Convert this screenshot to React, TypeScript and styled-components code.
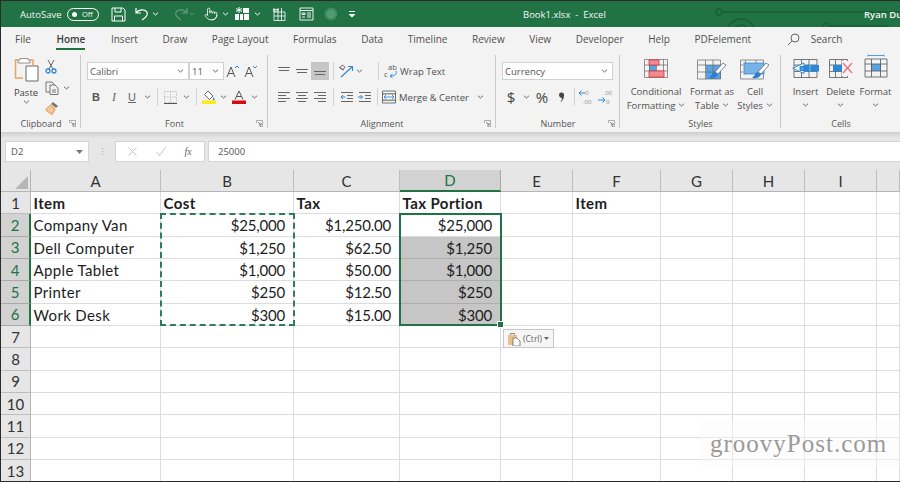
import React from "react"
import styled, { createGlobalStyle } from "styled-components"
import { Pointer } from "lucide-react"

const GlobalStyle = createGlobalStyle`
  html, body { margin: 0; padding: 0; background: #fff; overflow: hidden; }
  * { box-sizing: border-box; }
`

const UI_FONT = `"Open Sans", "Noto Sans", "Liberation Sans", sans-serif`
const GREEN = "#217346"

const Page = styled.div`
  position: relative;
  width: 900px;
  height: 482px;
  overflow: hidden;
  border-top: 1px solid #2b2b2b;
  border-left: 1px solid #2b2b2b;
  border-bottom: 1px solid #2b2b2b;
  font-family: ${UI_FONT};
  color: #444;
  background: #fff;
`

/* ---------- title bar ---------- */
const TitleBar = styled.div`
  position: relative;
  height: 26px;
  background: ${GREEN};
  color: #f2f7f4;
  display: flex;
  align-items: center;
  font-size: 9.5px;
  padding-left: 19px;
  overflow: hidden;
`
const QuickAccess = styled.div`
  display: flex;
  align-items: center;
  width: 503px;
  flex: none;
`
const AutoSaveLabel = styled.span`
  width: 47px;
  flex: none;
`
const Toggle = styled.div`
  width: 32px;
  height: 13px;
  flex: none;
  border: 1px solid #fff;
  border-radius: 7px;
  display: flex;
  align-items: center;
  gap: 5px;
  padding-left: 4px;
  font-size: 7.5px;
  margin-right: 11px;
  &::before {
    content: "";
    width: 5px;
    height: 5px;
    border-radius: 50%;
    background: #fff;
  }
`
const QuickSlot = styled.div<{ $w: number; $dim?: boolean }>`
  width: ${p => p.$w}px;
  flex: none;
  height: 20px;
  display: flex;
  align-items: center;
  justify-content: center;
  opacity: ${p => (p.$dim ? 0.3 : 1)};
`
const DocTitle = styled.div`
  width: 341px;
  flex: none;
  font-size: 9.5px;
  white-space: pre;
`
const UserName = styled.div`
  font-size: 9.5px;
  white-space: nowrap;
  font-weight: 600;
  position: relative;
  z-index: 1;
`
const Circuit = styled.svg`
  position: absolute;
  left: 700px;
  top: 0;
`

/* ---------- tabs ---------- */
const TabBar = styled.div`
  height: 26px;
  background: #f3f3f3;
  display: flex;
  align-items: flex-start;
  padding-left: 14px;
  gap: 24.6px;
  font-size: 10px;
  color: #505050;
`
const Tab = styled.div<{ $active?: boolean; $first?: boolean }>`
  height: 23px;
  padding-top: 5px;
  white-space: nowrap;
  margin-right: ${p => (p.$first ? "1px" : "0")};
  font-weight: ${p => (p.$active ? 600 : 400)};
  color: ${p => (p.$active ? "#3d3d3d" : "#505050")};
  border-bottom: ${p => (p.$active ? `2px solid ${GREEN}` : "2px solid transparent")};
`
const SearchTab = styled.div`
  margin-left: 11px;
  padding-top: 5px;
  display: flex;
  align-items: flex-start;
  gap: 11px;
  svg { margin-top: 1px; }
`

/* ---------- ribbon ---------- */
const Ribbon = styled.div`
  height: 79px;
  background: #f3f3f3;
  display: flex;
`
const Group = styled.div<{ $w: number; $last?: boolean }>`
  position: relative;
  width: ${p => p.$w}px;
  flex: none;
  display: flex;
  flex-direction: column;
  &::after {
    content: "";
    display: ${p => (p.$last ? "none" : "block")};
    position: absolute;
    right: 0;
    top: 2px;
    bottom: 4px;
    width: 1px;
    background: #c9c9c9;
  }
`
const GroupBody = styled.div`
  flex: 1;
  min-height: 0;
  display: flex;
`
const GroupLabel = styled.div`
  position: relative;
  height: 15px;
  text-align: center;
  font-size: 9px;
  line-height: 13px;
  color: #555;
`
const Launcher = styled.svg`
  position: absolute;
  right: 5px;
  top: 3px;
`
const Rows = styled.div<{ $pad: number }>`
  padding: 9px 0 0 ${p => p.$pad}px;
  display: flex;
  flex-direction: column;
  gap: 8px;
`
const Row = styled.div`
  height: 18px;
  display: flex;
  align-items: center;
`
const Slot = styled.div<{ $w: number; $on?: boolean }>`
  width: ${p => p.$w}px;
  height: 18px;
  flex: none;
  display: flex;
  align-items: center;
  justify-content: center;
  background: ${p => (p.$on ? "#c6c6c6" : "transparent")};
`
const Sep = styled.div<{ $w: number }>`
  width: ${p => p.$w}px;
  height: 18px;
  flex: none;
  display: flex;
  justify-content: center;
  &::before {
    content: "";
    width: 1px;
    background: #d2d2d2;
  }
`
const Combo = styled.div<{ $w: number }>`
  width: ${p => p.$w}px;
  height: 18px;
  flex: none;
  background: #fff;
  border: 1px solid #d0d0d0;
  display: flex;
  align-items: center;
  justify-content: space-between;
  padding: 0 4px 0 2px;
  font-size: 9.5px;
  color: #555;
`
const TextAction = styled.div<{ $w: number; $pad?: number }>`
  width: ${p => p.$w}px;
  height: 18px;
  flex: none;
  display: flex;
  align-items: center;
  gap: 8px;
  padding-left: ${p => p.$pad ?? 0}px;
  font-size: 9.5px;
  white-space: nowrap;
  color: #505050;
`
const NumberGlyph = styled.span`
  font-size: 15px;
  color: #444;
`
const PasteButton = styled.div`
  width: 36px;
  margin-left: 7px;
  padding-top: 4px;
  display: flex;
  flex-direction: column;
  align-items: center;
  gap: 1px;
  font-size: 9.5px;
  line-height: 13px;
  svg:first-child { margin-bottom: 3px; }
`
const ClipTools = styled.div`
  padding: 5px 0 0 1px;
  display: flex;
  flex-direction: column;
  gap: 3px;
`
const ClipTool = styled.div`
  height: 19px;
  display: flex;
  align-items: center;
  gap: 4px;
`
const TallButton = styled.div<{ $w: number }>`
  width: ${p => p.$w}px;
  flex: none;
  padding-top: 6px;
  display: flex;
  flex-direction: column;
  align-items: center;
  font-size: 9.5px;
  line-height: 13.5px;
  color: #505050;
  text-align: center;
  white-space: nowrap;
`
const TallIcon = styled.div<{ $raised?: boolean }>`
  height: ${p => (p.$raised ? 31 : 26)}px;
  margin-top: ${p => (p.$raised ? -5 : 0)}px;
  display: flex;
  align-items: flex-start;
`
const TallLine = styled.div`
  height: 13.5px;
  display: flex;
  align-items: center;
  gap: 3px;
`
const TallSpacer = styled.div<{ $w: number }>`
  width: ${p => p.$w}px;
  flex: none;
`
const RibbonShadow = styled.div`
  height: 6px;
  background: linear-gradient(#cfcfcf, #e6e6e6);
`

/* ---------- formula bar ---------- */
const FormulaBar = styled.div`
  height: 32px;
  background: #e6e6e6;
  display: flex;
  padding: 3px 0 0 4px;
  align-items: flex-start;
`
const NameBox = styled.div`
  width: 84px;
  height: 21px;
  flex: none;
  background: #fff;
  border: 1px solid #d4d4d4;
  display: flex;
  align-items: center;
  justify-content: space-between;
  padding: 0 5px;
  font-size: 9.5px;
  color: #555;
`
const Grip = styled.div`
  width: 26px;
  height: 21px;
  flex: none;
  display: flex;
  align-items: center;
  justify-content: center;
  color: #a5a5a5;
  font-size: 9px;
`
const FormulaButtons = styled.div`
  width: 90px;
  height: 21px;
  flex: none;
  background: #fff;
  border: 1px solid #d4d4d4;
  display: flex;
  align-items: center;
  justify-content: space-around;
  padding: 0 3px;
  font-family: "Liberation Serif", serif;
  font-style: italic;
  font-size: 10px;
  color: #666;
  margin-right: 3px;
`
const FormulaInput = styled.div`
  flex: 1;
  height: 21px;
  background: #fff;
  border: 1px solid #d4d4d4;
  border-right: none;
  padding-left: 9px;
  font-size: 9.5px;
  line-height: 19px;
  color: #555;
`

/* ---------- sheet ---------- */
const Sheet = styled.div`
  position: relative;
  display: grid;
  grid-template-columns: 30px 130px 133px 106px 101px 72px 88px 72px 72px 72px 23px;
  grid-template-rows: 22px repeat(13, 22.35px);
  font-family: Lato, "Liberation Sans", sans-serif;
  font-size: 15px;
  color: #1d1d1d;
`
const Corner = styled.div`
  background: #e6e6e6;
  border-right: 1px solid #b5b5b5;
  border-bottom: 1px solid #b5b5b5;
  position: relative;
  &::after {
    content: "";
    position: absolute;
    right: 2px;
    bottom: 2px;
    border-style: solid;
    border-width: 0 0 13px 13px;
    border-color: transparent transparent #b7b7b7 transparent;
  }
`
const ColHead = styled.div<{ $on?: boolean }>`
  background: ${p => (p.$on ? "#d2d2d2" : "#e6e6e6")};
  color: ${p => (p.$on ? "#217346" : "#333")};
  border-right: 1px solid ${p => (p.$on ? "#a9a9a9" : "#bdbdbd")};
  border-bottom: ${p => (p.$on ? `2px solid ${GREEN}` : "1px solid #b5b5b5")};
  display: flex;
  align-items: center;
  justify-content: center;
`
const RowHead = styled.div<{ $on?: boolean }>`
  background: ${p => (p.$on ? "#d2d2d2" : "#e6e6e6")};
  color: ${p => (p.$on ? "#217346" : "#333")};
  border-right: ${p => (p.$on ? `2px solid ${GREEN}` : "1px solid #b5b5b5")};
  border-bottom: 1px solid ${p => (p.$on ? "#a9a9a9" : "#bdbdbd")};
  display: flex;
  align-items: center;
  justify-content: center;
`
const Cell = styled.div<{ $right?: boolean; $bold?: boolean; $copied?: boolean }>`
  background: ${p => (p.$copied ? "#c6c6c6" : "#fff")};
  border-right: 1px solid ${p => (p.$copied ? "#adadad" : "#dcdcdc")};
  border-bottom: 1px solid ${p => (p.$copied ? "#adadad" : "#dcdcdc")};
  display: flex;
  align-items: center;
  justify-content: ${p => (p.$right ? "flex-end" : "flex-start")};
  padding: 0.5px 8px 0 2.5px;
  font-weight: ${p => (p.$bold ? 700 : 400)};
  white-space: nowrap;
  letter-spacing: ${p => (p.$right ? "-0.2px" : p.$bold ? "0.4px" : "0.35px")};
`
/* absolute children of a grid take their grid area as containing block,
   so these overlays stay out of the cell auto-placement */
const MarchingAnts = styled.div`
  position: absolute;
  grid-column: 3 / 4;
  grid-row: 3 / 8;
  inset: -1px -1px 0 -1px;
  border: 2px dashed #2f7d57;
  z-index: 2;
  pointer-events: none;
`
const Selection = styled.div`
  position: absolute;
  grid-column: 5 / 6;
  grid-row: 3 / 8;
  inset: -1px -1px 0 -1px;
  border: 2px solid ${GREEN};
  z-index: 3;
  pointer-events: none;
`
const FillHandle = styled.div`
  position: absolute;
  right: -4px;
  bottom: -4px;
  width: 5px;
  height: 5px;
  background: ${GREEN};
  border: 1px solid #fff;
  box-sizing: content-box;
`
const PasteTag = styled.div`
  position: absolute;
  grid-column: 6 / 7;
  grid-row: 8 / 9;
  left: 2px;
  top: 3px;
  z-index: 4;
  width: 51px;
  height: 19px;
  background: #f6f6f6;
  border: 1px solid #c6c6c6;
  display: flex;
  align-items: center;
  gap: 2px;
  padding-left: 3px;
  font-family: ${UI_FONT};
  font-size: 8.5px;
  color: #666;
`
const Watermark = styled.div`
  position: absolute;
  right: 0;
  bottom: 14px;
  width: 200px;
  height: 46px;
  display: flex;
  align-items: center;
  padding-left: 10px;
  background: rgba(250, 250, 250, 0.4);
  font-family: "Liberation Serif", serif;
  font-size: 25px;
  letter-spacing: 1px;
  color: #9a9a9a;
  z-index: 5;
`

/* ---------- icons ---------- */
const Chev = ({ color = "#666" }: { color?: string }) => (
  <svg width="7" height="4" viewBox="0 0 7 4">
    <path d="M1 .7 3.5 3 6 .7" fill="none" stroke={color} strokeWidth="1" />
  </svg>
)

const Lines = ({ rows }: { rows: [number, number, number][] }) => (
  <svg width="14" height="14" viewBox="0 0 14 14">
    {rows.map(([x, y, w], i) => (
      <rect key={i} x={x} y={y} width={w} height="1" fill="#666" />
    ))}
  </svg>
)

const SaveIcon = () => (
  <svg width="15" height="15" viewBox="0 0 15 15" fill="none" stroke="#fff" strokeWidth="1">
    <path d="M1 1h11l2 2v11H1zM4 1v4h6V1M3.500 14V9h8v5" />
  </svg>
)
const UndoIcon = () => (
  <svg width="14" height="14" viewBox="0 0 14 14" fill="none" stroke="#fff" strokeWidth="1.2">
    <path d="M1 1v5h5M1.500 5.500C4 2.500 9 2 11.500 4.500c2 2.300 .5 5.500-4.500 8.500" />
  </svg>
)
const RedoIcon = () => (
  <svg width="14" height="14" viewBox="0 0 14 14" fill="none" stroke="#fff" strokeWidth="1.2">
    <path d="M13 1v5H8M12.500 5.500C10 2.500 5 2 2.500 4.500c-2 2.300-.5 5.500 4.500 8.500" />
  </svg>
)
const StarTable = () => (
  <svg width="16" height="14" viewBox="0 0 16 14">
    <path d="M5 0v6M2 1.500l6 3M8 1.500l-6 3" stroke="#fff" strokeWidth="1" />
    <path d="M9 1h6v5H9zM1 7h4v6H1zM6 7h3v6H6zM10 7h5v6h-5z" fill="#fff" />
  </svg>
)
const SheetIcon = () => (
  <svg width="14" height="14" viewBox="0 0 14 14" fill="none" stroke="#fff" strokeWidth=".8">
    <path d="M2 5h11v8.500H2zM2 9h11M6 5v8.500M9.500 1v12.500M6 1v4M2 1v4" />
    <path d="M1 2.500h6M1 4h5" />
  </svg>
)
const FormIcon = () => (
  <svg width="15" height="14" viewBox="0 0 15 14" fill="none" stroke="#fff" strokeWidth=".9">
    <path d="M1 1h13v12H1zM1 3.500h13" />
    <path d="M3 6h3v1.500H3zM8 6h4M8 8h4M3 10h3M8 10h4" />
  </svg>
)
const CustomizeIcon = () => (
  <svg width="8" height="7" viewBox="0 0 8 7">
    <path d="M1 .5h6" stroke="#fff" strokeWidth="1" />
    <path d="M.5 3h7L4 6.500z" fill="#fff" />
  </svg>
)
const PasteIcon = () => (
  <svg width="25" height="25" viewBox="0 0 25 25" fill="none">
    <path d="M4 3H1.500v18H9M16 3h3v5" stroke="#e8a35f" strokeWidth="1.500" />
    <path d="M6 3V1.500h8V3h2v3H4V3z" fill="#fff" stroke="#888" strokeWidth=".9" />
    <path d="M12 9h12v15H12z" fill="#fff" stroke="#666" strokeWidth="1" />
  </svg>
)
const ScissorsIcon = () => (
  <svg width="12" height="15" viewBox="0 0 12 15" fill="none">
    <path d="M3 1l5 9M9 1 4 10" stroke="#666" strokeWidth="1" />
    <circle cx="3" cy="12" r="2" stroke="#2b88d8" strokeWidth="1.300" />
    <circle cx="9" cy="12" r="2" stroke="#2b88d8" strokeWidth="1.300" />
  </svg>
)
const CopyIcon = () => (
  <svg width="14" height="14" viewBox="0 0 14 14" fill="#f3f3f3" stroke="#666" strokeWidth=".9">
    <path d="M1 1h6l2 2v8H1z" />
    <path d="M5 4h5l3 3v6.500H5z" />
    <path d="M7 9h4M7 11h4" />
  </svg>
)
const PainterIcon = () => (
  <svg width="14" height="14" viewBox="0 0 14 14" fill="none">
    <path d="M8 1l5 4-2 2-5-4z" fill="#777" />
    <path d="M5.500 4 10 8l-3 5.500C5 12 2 10.500.8 8.500z" fill="#f3c79b" stroke="#e8923c" strokeWidth="1" />
  </svg>
)
const GrowIcon = ({ up }: { up: boolean }) => (
  <svg width="14" height="14" viewBox="0 0 14 14" fill="none">
    <path d="M1 13 5 3l4 10M2.500 9.500h5" stroke="#555" strokeWidth="1" />
    <path d={up ? "M9 4l2-2 2 2" : "M9 2l2 2 2-2"} stroke="#2b88d8" strokeWidth="1" />
  </svg>
)
const Bold = styled.span`
  font-family: "Liberation Sans", sans-serif;
  font-weight: 700;
  font-size: 11px;
  color: #555;
`
const Italic = styled.span`
  font-family: "Liberation Serif", serif;
  font-style: italic;
  font-size: 12px;
  color: #666;
`
const Under = styled.span`
  font-family: "Liberation Sans", sans-serif;
  font-size: 11px;
  color: #666;
  text-decoration: underline;
`
const BordersIcon = () => (
  <svg width="13" height="13" viewBox="0 0 13 13" fill="none" stroke="#c4c4c4" strokeWidth="1" strokeDasharray="1.500 1">
    <path d="M.5.500h12v11H.5zM6.500.500v11M.5 6h12" />
    <path d="M0 12.500h13" stroke="#555" strokeDasharray="none" />
  </svg>
)
const FillIcon = () => (
  <svg width="14" height="14" viewBox="0 0 14 14" fill="none">
    <path d="M6 1l5 5-3.500 3.500-5-5z" stroke="#666" strokeWidth="1" fill="#fff" />
    <path d="M11.500 7c1 1.500 1.500 2 1 3s-2 .5-1.500-.5z" fill="#2b88d8" />
    <rect x="0" y="10.500" width="14" height="3.500" fill="#ffeb17" />
  </svg>
)
const FontColorIcon = () => (
  <svg width="14" height="14" viewBox="0 0 14 14" fill="none">
    <path d="M3 9.500 7 1l4 8.500M4.500 6.500h5" stroke="#555" strokeWidth="1" />
    <rect x="0" y="10.500" width="14" height="3.500" fill="#d50c0c" />
  </svg>
)
const OrientationIcon = () => (
  <svg width="16" height="14" viewBox="0 0 16 14" fill="none">
    <path d="M1 3l5 3M4 1l3 2-2 3-3-2z" stroke="#666" strokeWidth=".9" />
    <path d="M3 13 14 3M10 2.500h4.500V7" stroke="#2b88d8" strokeWidth="1.100" />
  </svg>
)
const IndentIcon = ({ out }: { out: boolean }) => (
  <svg width="13" height="13" viewBox="0 0 13 13" fill="none">
    <path d="M1 1.500h12M7 4.500h6M7 7.500h6M1 10.500h12" stroke="#666" strokeWidth="1" />
    <path d={out ? "M5.500 6H1M3 4 1 6l2 2" : "M0 6h4.500M2.500 4l2 2-2 2"} stroke="#2b88d8" strokeWidth="1" />
  </svg>
)
const WrapIcon = () => (
  <svg width="14" height="16" viewBox="0 0 14 16" fill="none">
    <text x="4" y="6.500" fontSize="7.500" fill="#555" fontFamily="Open Sans">ab</text>
    <text x="0" y="14" fontSize="7.500" fill="#555" fontFamily="Open Sans">c</text>
    <path d="M12 8c1 2.500-.5 5-5 5M8.500 11 6 13l2.500 2" stroke="#2b88d8" strokeWidth="1" />
  </svg>
)
const MergeIcon = () => (
  <svg width="14" height="14" viewBox="0 0 14 14" fill="none" stroke="#666" strokeWidth=".9">
    <path d="M.5 1h13v12H.5zM.5 4h13M.5 10h13" />
    <path d="M.5 4h13v6H.5z" fill="#fff" />
    <path d="M2 7h10M4 5l-2 2 2 2M10 5l2 2-2 2" stroke="#2b88d8" />
  </svg>
)
const CommaIcon = () => (
  <svg width="7" height="11" viewBox="0 0 7 11">
    <path d="M1 2.500a2.500 2.500 0 1 1 5 1c0 3-1.500 5.500-4 7C3.500 8.500 4 7.500 4 6 2 6 1 4.500 1 2.500z" fill="#444" />
  </svg>
)
const DecimalIcon = ({ more }: { more: boolean }) => (
  <svg width="15" height="16" viewBox="0 0 15 16" fill="none">
    <text x="7" y="5.500" fontSize="6" fill="#888" fontFamily="Open Sans">{more ? ".00" : "0"}</text>
    <text x={more ? 9 : 5} y="14.500" fontSize="6" fill="#888" fontFamily="Open Sans">{more ? "0" : ".00"}</text>
    {more ? (
      <path d="M1 11h7M5.500 8.500 8 11l-2.500 2.500" stroke="#2b88d8" strokeWidth="1" />
    ) : (
      <path d="M1 4h6M3.500 1.500 1 4l2.500 2.500" stroke="#2b88d8" strokeWidth="1" />
    )}
  </svg>
)
const SearchIcon = () => (
  <svg width="13" height="13" viewBox="0 0 13 13" fill="none" stroke="#666" strokeWidth="1">
    <circle cx="8" cy="5" r="4" />
    <path d="M5 8 1 12" />
  </svg>
)
const CondFormatIcon = () => (
  <svg width="24" height="19" viewBox="0 0 24 19" fill="none">
    <rect x="5" y="6" width="7" height="6" fill="#5ba3e0" />
    <path d="M.5.500h23v18H.5zM.5 6h23M.5 12h23M5.500.500v18M12.500.500v18M19.500.500v18" stroke="#666" strokeWidth=".7" />
    <rect x="5" y="1" width="10" height="5" fill="#f28a90" stroke="#d9363e" strokeWidth=".8" />
    <rect x="5" y="12" width="15" height="6" fill="#f28a90" stroke="#d9363e" strokeWidth=".8" />
  </svg>
)
const Brush = () => (
  <>
    <path d="M26 4 18 13l3 2 8-9z" fill="#fff" stroke="#666" strokeWidth=".8" />
    <path d="M17 13c-2 1-2 4-5 6 4 1 8 0 9-4z" fill="#2b7cd3" />
  </>
)
const TableStyleIcon = () => (
  <svg width="30" height="21" viewBox="0 0 30 21" fill="none">
    <rect x="9" y="6" width="15" height="14" fill="#5ba3e0" />
    <path d="M.5 1h23v19H.5zM.5 6h23M.5 13h23M8.500 1v19M16 1v19" stroke="#666" strokeWidth=".7" />
    <Brush />
  </svg>
)
const CellStyleIcon = () => (
  <svg width="30" height="21" viewBox="0 0 30 21" fill="none">
    <path d="M.5 1h23v19H.5z" stroke="#666" strokeWidth=".7" />
    <path d="M.5 6h3M.5 13h3M5.500 1v4M16 1v4" stroke="#666" strokeWidth=".7" />
    <rect x="4" y="4" width="20" height="11" fill="#78b3e8" stroke="#2b7cd3" strokeWidth=".7" />
    <Brush />
  </svg>
)
const InsertCellsIcon = () => (
  <svg width="27" height="19" viewBox="0 0 27 19" fill="none">
    <path d="M2 .5h23v18H2zM2 6h23M2 12.500h23M9.500.500v18M17 .5v18" stroke="#555" strokeWidth=".8" />
    <rect x="7" y="6" width="20" height="6.500" fill="#2b88d8" />
    <path d="M10 6v6.500M18 6v6.500" stroke="#9fcaf0" strokeWidth=".8" />
    <path d="M12 4 .8 9.300 12 14.500v-3h-4v-4h4z" fill="#fff" stroke="#2b88d8" strokeWidth="1" />
  </svg>
)
const DeleteCellsIcon = () => (
  <svg width="24" height="19" viewBox="0 0 24 19" fill="none">
    <path d="M.5.500h18v18H.5zM.5 6h18M.5 12.500h18M6.500.500v18M13 .5v18" stroke="#555" strokeWidth=".8" />
    <rect x="4" y="6" width="11" height="6.500" fill="#2b88d8" />
    <rect x="13" y="2" width="11" height="15" fill="#f3f3f3" />
    <path d="M14 4l9 10M23 4l-9 10" stroke="#ef7079" strokeWidth="1.300" />
  </svg>
)
const FormatCellsIcon = () => (
  <svg width="24" height="24" viewBox="0 0 24 24" fill="none">
    <path d="M4 1.500h16M4 .5v2M20 .5v2" stroke="#2b88d8" strokeWidth=".8" />
    <rect x="7" y="10" width="10" height="7" fill="#5ba3e0" />
    <path d="M1 5h22v18H1zM1 10h22M1 17h22M7.500 5v18M16.500 5v18" stroke="#555" strokeWidth=".8" />
  </svg>
)
const PasteTagIcon = () => (
  <svg width="14" height="14" viewBox="0 0 14 14" fill="none">
    <path d="M1 3h9v10H1z" fill="#e9c08e" />
    <path d="M3.500 3V1.500h4V3" stroke="#888" />
    <path d="M6 6h4l3 3v5H6z" fill="#fff" stroke="#666" strokeWidth=".8" />
  </svg>
)
const LauncherIcon = () => (
  <Launcher width="7" height="7" viewBox="0 0 7 7" fill="none">
    <path d="M.5 3V.5H6.500V6.500H3.500" stroke="#999" strokeWidth=".8" />
    <path d="M2 2l3 3M5 3v2H3" stroke="#666" strokeWidth=".8" />
  </Launcher>
)

/* ---------- data ---------- */
const tabs = ["Insert", "Draw", "Page Layout", "Formulas", "Data", "Timeline", "Review", "View", "Developer", "Help", "PDFelement"]
const columns = ["A", "B", "C", "D", "E", "F", "G", "H", "I", ""]

type Rec = [string, string, string, string]
const records: Rec[] = [
  ["Company Van", "$25,000", "$1,250.00", "$25,000"],
  ["Dell Computer", "$1,250", "$62.50", "$1,250"],
  ["Apple Tablet", "$1,000", "$50.00", "$1,000"],
  ["Printer", "$250", "$12.50", "$250"],
  ["Work Desk", "$300", "$15.00", "$300"],
]

const alignTop: [number, number, number][] = [[1, 3, 12], [2, 6, 10]]
const alignMid: [number, number, number][] = [[1, 5, 12], [2, 8, 10]]
const alignBottom: [number, number, number][] = [[1, 7, 12], [2, 10, 10]]
const leftLines: [number, number, number][] = [[1, 2, 12], [1, 5, 8], [1, 8, 12], [1, 11, 8]]
const midLines: [number, number, number][] = [[1, 2, 12], [3, 5, 8], [1, 8, 12], [3, 11, 8]]
const rightLines: [number, number, number][] = [[1, 2, 12], [5, 5, 8], [1, 8, 12], [5, 11, 8]]

const SheetGrid = () => (
  <Sheet>
    <Corner />
    {columns.map((c, i) => (
      <ColHead key={i} $on={c === "D"}>{c}</ColHead>
    ))}

    <RowHead>1</RowHead>
    <Cell $bold>Item</Cell>
    <Cell $bold>Cost</Cell>
    <Cell $bold>Tax</Cell>
    <Cell $bold>Tax Portion</Cell>
    <Cell />
    <Cell $bold>Item</Cell>
    <Cell /><Cell /><Cell /><Cell />

    {records.map((r, i) => (
      <React.Fragment key={r[0]}>
        <RowHead $on>{i + 2}</RowHead>
        <Cell>{r[0]}</Cell>
        <Cell $right>{r[1]}</Cell>
        <Cell $right>{r[2]}</Cell>
        <Cell $right $copied={i > 0}>{r[3]}</Cell>
        <Cell /><Cell /><Cell /><Cell /><Cell /><Cell />
      </React.Fragment>
    ))}

    {[7, 8, 9, 10, 11, 12, 13].map(n => (
      <React.Fragment key={n}>
        <RowHead>{n}</RowHead>
        {columns.map((_, i) => <Cell key={i} />)}
      </React.Fragment>
    ))}

    <MarchingAnts />
    <Selection><FillHandle /></Selection>
    <PasteTag>
      <PasteTagIcon />
      (Ctrl)
      <svg width="5" height="3" viewBox="0 0 5 3"><path d="M0 0h5L2.500 3z" fill="#666" /></svg>
    </PasteTag>
  </Sheet>
)

export default function App() {
  return (
    <Page>
      <GlobalStyle />
      <TitleBar>
        <QuickAccess>
          <AutoSaveLabel>AutoSave</AutoSaveLabel>
          <Toggle>Off</Toggle>
          <QuickSlot $w={17}><SaveIcon /></QuickSlot>
          <QuickSlot $w={6} />
          <QuickSlot $w={17}><UndoIcon /></QuickSlot>
          <QuickSlot $w={11}><Chev color="#fff" /></QuickSlot>
          <QuickSlot $w={11} />
          <QuickSlot $w={17} $dim><RedoIcon /></QuickSlot>
          <QuickSlot $w={6} $dim><Chev color="#fff" /></QuickSlot>
          <QuickSlot $w={8} />
          <QuickSlot $w={16}><Pointer size={14} color="#fff" strokeWidth={1.4} /></QuickSlot>
          <QuickSlot $w={13}><Chev color="#fff" /></QuickSlot>
          <QuickSlot $w={20}><StarTable /></QuickSlot>
          <QuickSlot $w={10}><Chev color="#fff" /></QuickSlot>
          <QuickSlot $w={34}><SheetIcon /></QuickSlot>
          <QuickSlot $w={20}><FormIcon /></QuickSlot>
          <QuickSlot $w={30}>
            <svg width="14" height="14" viewBox="0 0 14 14"><circle cx="7" cy="7" r="6.500" fill="#3d8a60" /><circle cx="7" cy="7" r="4.500" fill="#4f9a70" /></svg>
          </QuickSlot>
          <QuickSlot $w={12}><CustomizeIcon /></QuickSlot>
        </QuickAccess>
        <DocTitle>Book1.xlsx  -  Excel</DocTitle>
        <UserName>Ryan Dube</UserName>
        <Circuit width="200" height="26" viewBox="0 0 200 26" fill="none" stroke="#1a6339" strokeWidth="2">
          <circle cx="18" cy="11" r="3" />
          <path d="M21 11h180" />
          <circle cx="40" cy="32" r="14" />
          <circle cx="40" cy="32" r="8" />
          <circle cx="125" cy="25" r="3" />
          <path d="M128 25h60" />
        </Circuit>
      </TitleBar>

      <TabBar>
        <Tab $first>File</Tab>
        <Tab $active $first>Home</Tab>
        {tabs.map(t => <Tab key={t}>{t}</Tab>)}
        <SearchTab><SearchIcon />Search</SearchTab>
      </TabBar>

      <Ribbon>
        <Group $w={80}>
          <GroupBody>
            <PasteButton>
              <PasteIcon />
              Paste
              <Chev />
            </PasteButton>
            <ClipTools>
              <ClipTool><ScissorsIcon /></ClipTool>
              <ClipTool><CopyIcon /><Chev /></ClipTool>
              <ClipTool><PainterIcon /></ClipTool>
            </ClipTools>
          </GroupBody>
          <GroupLabel>Clipboard<LauncherIcon /></GroupLabel>
        </Group>

        <Group $w={187}>
          <GroupBody>
            <Rows $pad={6}>
              <Row>
                <Combo $w={102}>Calibri<Chev /></Combo>
                <Combo $w={35}>11<Chev /></Combo>
                <Slot $w={18}><GrowIcon up /></Slot>
                <Slot $w={18}><GrowIcon up={false} /></Slot>
              </Row>
              <Row>
                <Slot $w={18}><Bold>B</Bold></Slot>
                <Slot $w={18}><Italic>I</Italic></Slot>
                <Slot $w={18}><Under>U</Under></Slot>
                <Slot $w={12}><Chev /></Slot>
                <Sep $w={8} />
                <Slot $w={18}><BordersIcon /></Slot>
                <Slot $w={14}><Chev /></Slot>
                <Sep $w={6} />
                <Slot $w={20}><FillIcon /></Slot>
                <Slot $w={8}><Chev /></Slot>
                <Slot $w={2} />
                <Slot $w={20}><FontColorIcon /></Slot>
                <Slot $w={10}><Chev /></Slot>
              </Row>
            </Rows>
          </GroupBody>
          <GroupLabel>Font<LauncherIcon /></GroupLabel>
        </Group>

        <Group $w={228}>
          <GroupBody>
            <Rows $pad={7}>
              <Row>
                <Slot $w={18}><Lines rows={alignTop} /></Slot>
                <Slot $w={18}><Lines rows={alignMid} /></Slot>
                <Slot $w={18} $on><Lines rows={alignBottom} /></Slot>
                <Sep $w={8} />
                <Slot $w={18}><OrientationIcon /></Slot>
                <Slot $w={8}><Chev /></Slot>
                <Slot $w={11} />
                <Sep $w={8} />
                <Slot $w={18}><WrapIcon /></Slot>
                <TextAction $w={80}>Wrap Text</TextAction>
              </Row>
              <Row>
                <Slot $w={18}><Lines rows={leftLines} /></Slot>
                <Slot $w={18}><Lines rows={midLines} /></Slot>
                <Slot $w={18}><Lines rows={rightLines} /></Slot>
                <Sep $w={8} />
                <Slot $w={18}><IndentIcon out /></Slot>
                <Slot $w={18}><IndentIcon out={false} /></Slot>
                <Sep $w={8} />
                <Slot $w={16}><MergeIcon /></Slot>
                <TextAction $w={95} $pad={2}>Merge &amp; Center<Chev /></TextAction>
              </Row>
            </Rows>
          </GroupBody>
          <GroupLabel>Alignment<LauncherIcon /></GroupLabel>
        </Group>

        <Group $w={124}>
          <GroupBody>
            <Rows $pad={6}>
              <Row>
                <Combo $w={111}>Currency<Chev /></Combo>
              </Row>
              <Row>
                <Slot $w={18}><NumberGlyph>$</NumberGlyph></Slot>
                <Slot $w={12}><Chev /></Slot>
                <Slot $w={20}><NumberGlyph>%</NumberGlyph></Slot>
                <Slot $w={18}><CommaIcon /></Slot>
                <Sep $w={8} />
                <Slot $w={15}><DecimalIcon more={false} /></Slot>
                <Slot $w={23}><DecimalIcon more /></Slot>
              </Row>
            </Rows>
          </GroupBody>
          <GroupLabel>Number<LauncherIcon /></GroupLabel>
        </Group>

        <Group $w={161}>
          <GroupBody>
            <TallSpacer $w={8} />
            <TallButton $w={56}>
              <TallIcon><CondFormatIcon /></TallIcon>
              <TallLine>Conditional</TallLine>
              <TallLine>Formatting<Chev /></TallLine>
            </TallButton>
            <TallButton $w={56}>
              <TallIcon><TableStyleIcon /></TallIcon>
              <TallLine>Format as</TallLine>
              <TallLine>Table<Chev /></TallLine>
            </TallButton>
            <TallButton $w={30}>
              <TallIcon><CellStyleIcon /></TallIcon>
              <TallLine>Cell</TallLine>
              <TallLine>Styles<Chev /></TallLine>
            </TallButton>
          </GroupBody>
          <GroupLabel>Styles</GroupLabel>
        </Group>

        <Group $w={120} $last>
          <GroupBody>
            <TallSpacer $w={7} />
            <TallButton $w={35}>
              <TallIcon><InsertCellsIcon /></TallIcon>
              <TallLine>Insert</TallLine>
              <TallLine><Chev /></TallLine>
            </TallButton>
            <TallButton $w={35}>
              <TallIcon><DeleteCellsIcon /></TallIcon>
              <TallLine>Delete</TallLine>
              <TallLine><Chev /></TallLine>
            </TallButton>
            <TallButton $w={35}>
              <TallIcon $raised><FormatCellsIcon /></TallIcon>
              <TallLine>Format</TallLine>
              <TallLine><Chev /></TallLine>
            </TallButton>
          </GroupBody>
          <GroupLabel>Cells</GroupLabel>
        </Group>
      </Ribbon>
      <RibbonShadow />

      <FormulaBar>
        <NameBox>D2<svg width="7" height="4" viewBox="0 0 7 4"><path d="M0 0h7L3.500 4z" fill="#777" /></svg></NameBox>
        <Grip>⋮</Grip>
        <FormulaButtons>
          <svg width="9" height="9" viewBox="0 0 9 9"><path d="M.5.500l8 8M8.500.500l-8 8" stroke="#c4c4c4" /></svg>
          <svg width="10" height="9" viewBox="0 0 10 9" fill="none"><path d="M.5 5l3 3.500L9.500.500" stroke="#c4c4c4" /></svg>
          <span>fx</span>
        </FormulaButtons>
        <FormulaInput>25000</FormulaInput>
      </FormulaBar>

      <SheetGrid />
      <Watermark>groovyPost.com</Watermark>
    </Page>
  )
}
